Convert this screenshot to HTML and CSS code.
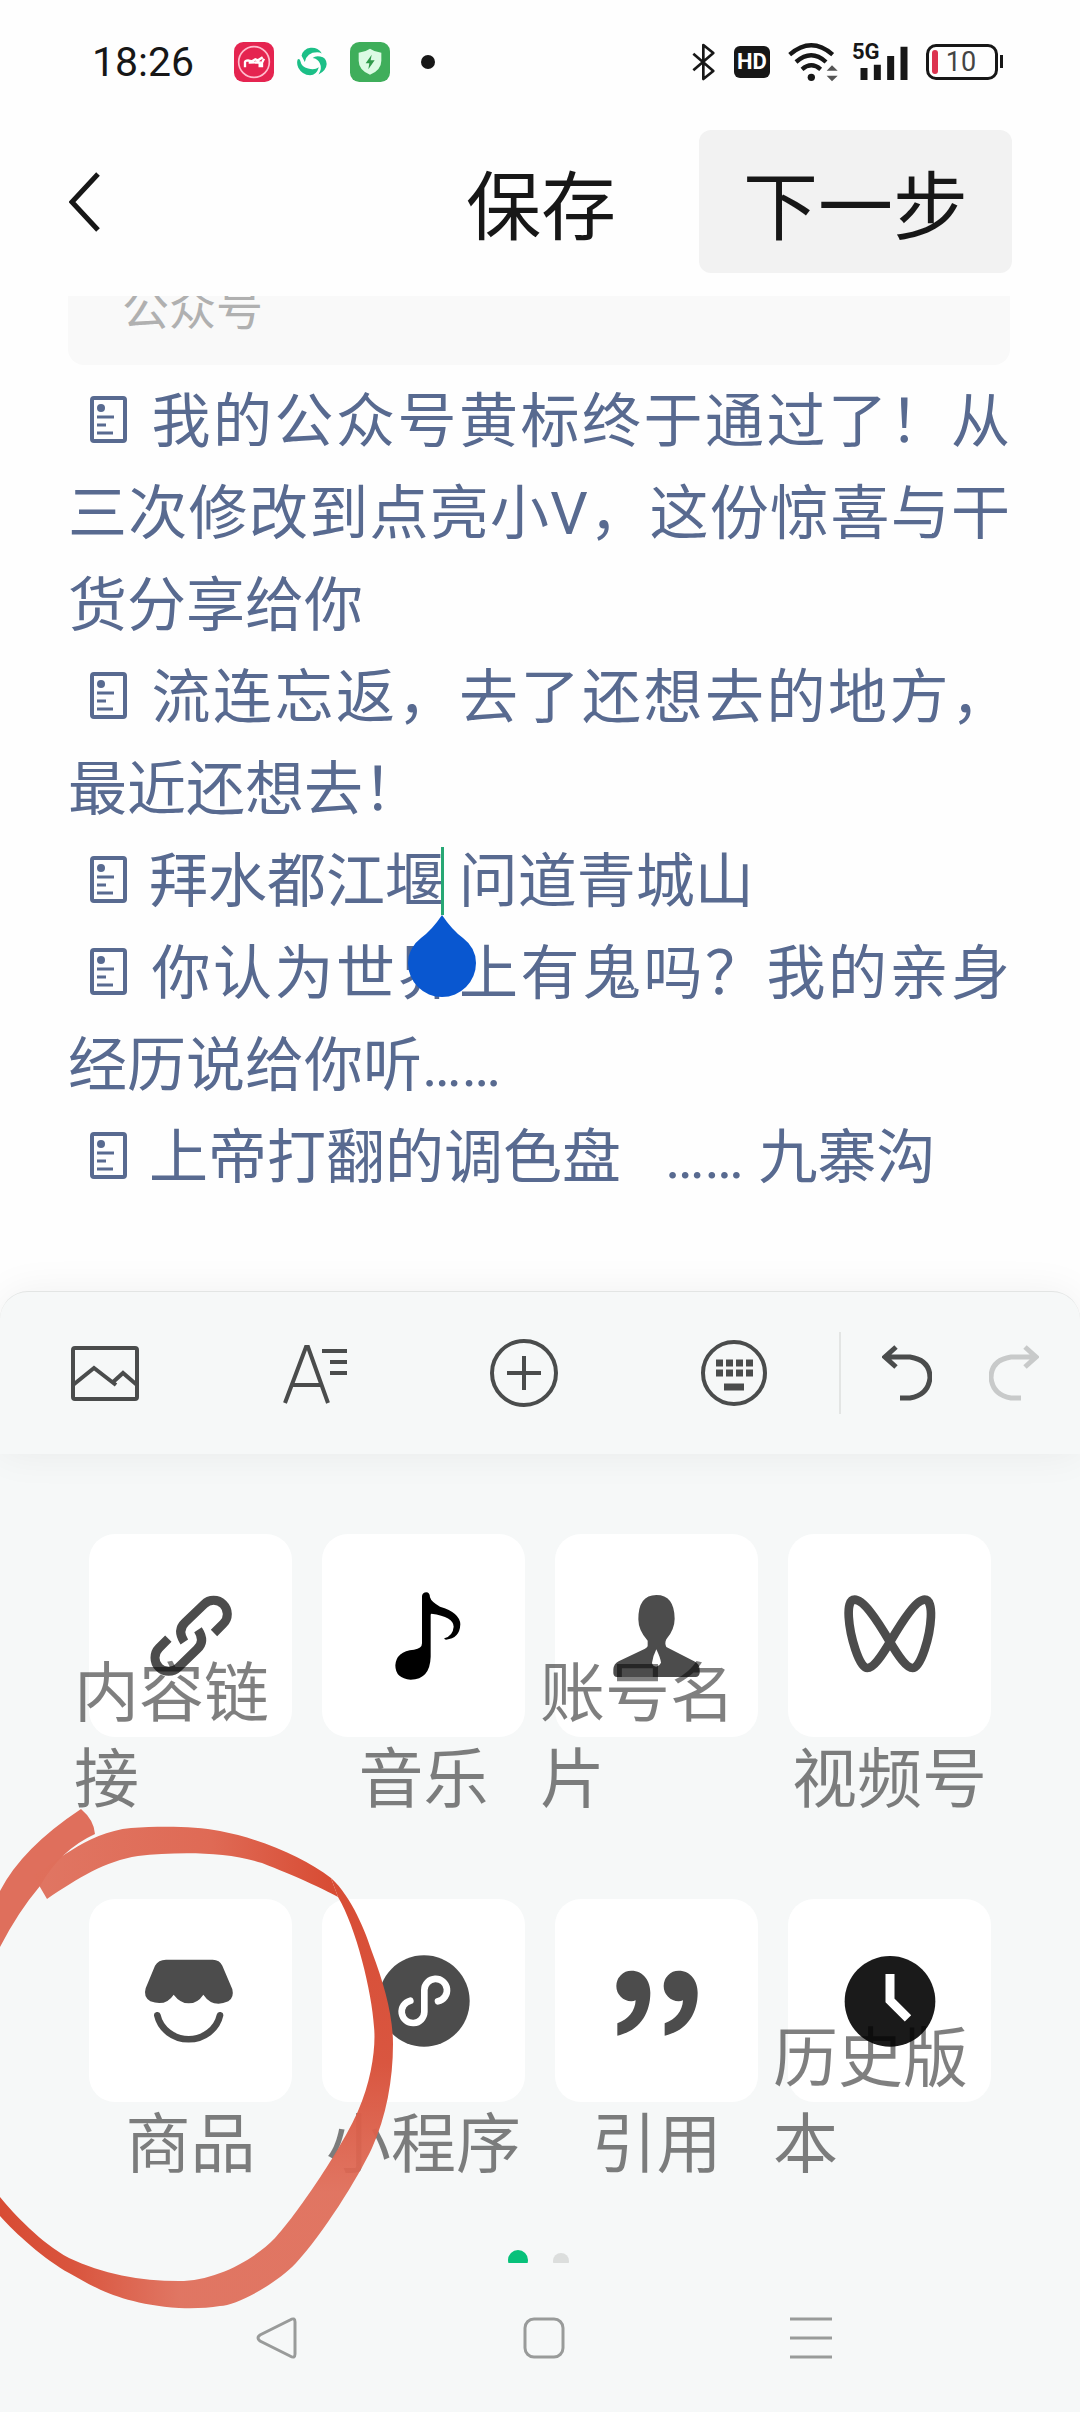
FILE: index.html
```html
<!DOCTYPE html>
<html lang="zh-CN">
<head>
  <meta charset="UTF-8">
  <meta name="viewport" content="width=device-width, initial-scale=1">
  <title>编辑文章</title>
  <link rel="stylesheet" href="styles.css">
</head>
<body>

  <svg class="defs" aria-hidden="true">
    <symbol id="doc" viewBox="0 0 37 47">
      <rect x="2" y="2" width="33" height="43" rx="2" fill="none" stroke="currentColor" stroke-width="4"/>
      <circle cx="11" cy="12" r="4" fill="currentColor"/>
      <path d="M7 21h17M7 29h9M7 37h16" stroke="currentColor" stroke-width="3"/>
    </symbol>
  </svg>

  <div class="statusbar">
    <span class="time">18:26</span>
    <svg class="app-icon" width="40" height="40" viewBox="0 0 120 120">
      <rect width="120" height="120" rx="28" fill="#e52450"/>
      <circle cx="60" cy="60" r="46" fill="none" stroke="#fbc" stroke-width="5"/>
      <path d="M33 76V60Q34 55 42 55L54 58L64 52L72 55L86 46M84 76V62L90 50M44 62L78 61M77 58V76" fill="none" stroke="#fff" stroke-width="7"/>
    </svg>
    <svg class="swirl" width="30" height="30" viewBox="0 0 92 92">
      <g fill="#1cbf87">
        <path d="M14 27A32 27 0 0 1 76 20Q70 16 62 16Q30 16 24 46Q18 34 14 27Z"/>
        <path d="M71 29Q90 32 91 52Q90 72 66 84Q78 66 70 50Q64 36 48 34Q56 26 71 29Z"/>
        <path d="M2 38Q8 34 10 42Q14 62 34 66Q54 72 67 62Q60 86 40 87Q16 86 4 64Q-2 50 2 38Z"/>
      </g>
    </svg>
    <svg class="app-icon" width="40" height="40" viewBox="0 0 120 120">
      <rect width="120" height="120" rx="28" fill="#3fae5b"/>
      <path d="M60 20Q74 30 94 32V56Q94 84 60 98Q26 84 26 56V32Q46 30 60 20Z" fill="#dcfbe4"/>
      <path d="M65 38L47 64H58L55 82L74 55H62Z" fill="#2f9a4a"/>
    </svg>
    <span class="more-dot"></span>

    <div class="signals">
      <svg width="24" height="38" viewBox="0 0 72 114">
        <path d="M4 32L64 84L34 108V6L64 30L4 82" fill="none" stroke="#171717" stroke-width="8" stroke-linejoin="round"/>
      </svg>
      <span class="hd">HD</span>
      <svg width="50" height="40" viewBox="0 0 150 120">
        <g fill="none" stroke="#171717" stroke-width="13">
          <path d="M5 38Q70-18 134 38"/>
          <path d="M24 60Q70 20 114 60"/>
          <path d="M42 82Q70 58 98 82"/>
        </g>
        <circle cx="70" cy="106" r="11" fill="#171717"/>
        <path d="M116 86L132 70L149 86ZM116 101L132 118L149 101Z" fill="#555"/>
      </svg>
      <div class="cell">
        <span class="cell-type">5G</span>
        <svg width="52" height="37" viewBox="0 0 156 111">
          <path d="M24 72V108M64 62V108M104 36V108M144 8V108" stroke="#171717" stroke-width="21"/>
        </svg>
      </div>
      <div class="battery"><span class="battery-level"></span>10</div>
    </div>
  </div>

  <header class="header">
    <button class="back" aria-label="返回">
      <svg width="32" height="60" viewBox="0 0 32 60"><path d="M29 2L3 30L29 58" fill="none" stroke="#171717" stroke-width="5"/></svg>
    </button>
    <button class="save">保存</button>
    <button class="next">下一步</button>
  </header>

  <main class="editor">
    <div class="card-tail"><span>公众号</span></div>
    <div class="article">
      <p><a href="#"><svg class="doc"><use href="#doc"/></svg>我的公众号黄标终于通过了！从三次修改到点亮小V，这份惊喜与干货分享给你</a></p>
      <p><a href="#"><svg class="doc"><use href="#doc"/></svg>流连忘返，去了还想去的地方，最近还想去！</a></p>
      <p><a href="#"><svg class="doc"><use href="#doc"/></svg>拜水都江堰<span class="caret"><svg class="handle" width="68" height="82" viewBox="0 0 68 82"><path d="M34 0Q44 15 55 23Q68 33 68 48A34 34 0 0 1 0 48Q0 33 13 23Q24 15 34 0Z" fill="#0957d0"/></svg></span> 问道青城山</a></p>
      <p><a href="#"><svg class="doc"><use href="#doc"/></svg>你认为世界上有鬼吗？我的亲身经历说给你听……</a></p>
      <p><a href="#"><svg class="doc"><use href="#doc"/></svg>上帝打翻的调色盘&nbsp;&nbsp; …… 九寨沟</a></p>
    </div>
  </main>

  <div class="toolbar">
    <div class="toolbar-main">
      <button aria-label="图片">
        <svg width="68" height="68" viewBox="0 0 68 68" fill="none" stroke="#4a4c4c" stroke-width="4">
          <rect x="2" y="9" width="64" height="51" rx="2"/>
          <path d="M2 46L23 29L45 46M41 44L52 34L66 46"/>
        </svg>
      </button>
      <button aria-label="文字样式">
        <svg width="68" height="68" viewBox="0 0 68 68" fill="none" stroke="#4a4c4c" stroke-width="4">
          <path d="M4 64L25 8H27L47 64M11 46H41M41 12H66M49 23H66M49 34H66"/>
        </svg>
      </button>
      <button aria-label="添加">
        <svg width="68" height="68" viewBox="0 0 68 68" fill="none" stroke="#4a4c4c" stroke-width="4">
          <circle cx="34" cy="34" r="32"/>
          <path d="M34 17V51M17 34H51"/>
        </svg>
      </button>
      <button aria-label="键盘">
        <svg width="68" height="68" viewBox="0 0 68 68" fill="none" stroke="#4a4c4c">
          <circle cx="34" cy="34" r="31" stroke-width="4"/>
          <path d="M16 24H53M16 34H53" stroke-width="7" stroke-dasharray="7 3"/>
          <path d="M24 48H44" stroke-width="7"/>
        </svg>
      </button>
    </div>
    <div class="toolbar-history">
      <button aria-label="撤销">
        <svg width="50" height="56" viewBox="0 0 50 56" fill="none" stroke="#4a4c4c" stroke-width="5">
          <path d="M14 2L3 12L14 22M3 12H28Q48 15 48 33Q46 50 28 53H18"/>
        </svg>
      </button>
      <button aria-label="重做" disabled>
        <svg width="50" height="56" viewBox="0 0 50 56" fill="none" stroke="#c8caca" stroke-width="5">
          <path d="M36 2L47 12L36 22M47 12H22Q2 15 2 33Q4 50 22 53H32"/>
        </svg>
      </button>
    </div>
  </div>

  <section class="panel">
    <div class="tools">
      <button class="tool">
        <span class="tile">
          <svg viewBox="0 0 300 300" fill="none" stroke="#4c4c4c" stroke-width="27">
            <path d="M219 141L247 113A41 41 0 0 0 189 55L133 109Q107 133 130 168"/>
            <path d="M82 158L54 186A41 41 0 0 0 112 244L168 190Q194 166 171 131"/>
          </svg>
        </span>
        <span class="label"><span>内容链接</span></span>
      </button>
      <button class="tool">
        <span class="tile">
          <svg viewBox="0 0 300 300">
            <path d="M144 30Q146 19 157 19Q167 19 168 34Q172 48 198 62Q258 80 259 115Q257 158 216 161Q209 160 211 157Q237 149 239 122Q239 92 172 83Q170 84 170 88V212Q168 280 110 281Q64 278 64 238Q66 196 120 191Q144 188 144 172Z"/>
          </svg>
        </span>
        <span class="label"><span>音乐</span></span>
      </button>
      <button class="tool">
        <span class="tile">
          <svg viewBox="0 0 300 300">
            <path d="M148 27Q202 27 203 98Q203 130 178 160Q172 172 178 183L260 225Q278 233 278 252V262Q276 273 266 273H30Q20 273 19 262V250Q20 234 35 226L114 188Q122 184 122 180V164Q94 134 94 100Q94 27 148 27Z" fill="#4c4c4c"/>
            <path d="M148 190Q160 215 162 230Q158 240 148 242Q136 240 135 230Q138 210 148 190Z" fill="#fff"/>
          </svg>
        </span>
        <span class="label"><span>账号名片</span></span>
      </button>
      <button class="tool">
        <span class="tile">
          <svg viewBox="0 0 300 300">
            <path d="M150 168C110 100 70 41 44 41C14 41 26 130 46 190C60 232 72 246 82 246C100 246 125 210 150 168C190 100 230 41 254 41C284 41 274 130 254 190C240 232 228 246 218 246C200 246 175 210 150 168Z" fill="none" stroke="#4c4c4c" stroke-width="26"/>
          </svg>
        </span>
        <span class="label"><span>视频号</span></span>
      </button>
      <button class="tool">
        <span class="tile">
          <svg viewBox="0 0 300 300">
            <path d="M75 26H215Q236 26 244 44L274 115Q280 140 262 151Q215 172 187 131Q170 157 143 157Q118 157 98 131Q74 168 28 151Q6 138 14 112L42 44Q52 26 75 26Z" fill="#4c4c4c"/>
            <path d="M49 193A96 90 0 0 0 237 193" fill="none" stroke="#4c4c4c" stroke-width="20" stroke-linecap="round"/>
          </svg>
        </span>
        <span class="label"><span>商品</span></span>
      </button>
      <button class="tool">
        <span class="tile">
          <svg viewBox="0 0 300 300">
            <circle cx="150" cy="150" r="137" fill="#4c4c4c"/>
            <path d="M192 151A34 34 0 1 0 151 117V183A34 34 0 1 1 109 149" fill="none" stroke="#fff" stroke-width="20" stroke-linecap="round"/>
          </svg>
        </span>
        <span class="label"><span>小程序</span></span>
      </button>
      <button class="tool">
        <span class="tile">
          <svg viewBox="0 0 300 300" fill="#4c4c4c">
            <path d="M73 59C110 59 130 90 130 125C130 190 95 240 31 254V217C65 205 84 180 86 148C82 150 78 151 73 151A45 46 0 0 1 73 59Z"/>
            <path d="M215 59C252 59 272 90 272 125C272 190 237 240 173 254V217C207 205 226 180 228 148C224 150 220 151 215 151A45 46 0 0 1 215 59Z"/>
          </svg>
        </span>
        <span class="label"><span>引用</span></span>
      </button>
      <button class="tool">
        <span class="tile">
          <svg viewBox="0 0 300 300">
            <circle cx="150" cy="151" r="136" fill="#1a1a1a"/>
            <path d="M150 69V148L204 202" fill="none" stroke="#fff" stroke-width="27"/>
          </svg>
        </span>
        <span class="label"><span>历史版本</span></span>
      </button>
    </div>

    <div class="pager"><span class="page current"></span><span class="page"></span></div>

    <!-- hand-drawn ring around 商品 -->
    <svg class="ring" width="400" height="520" viewBox="0 1800 400 520">
      <defs>
        <linearGradient id="ringTop" gradientUnits="userSpaceOnUse" x1="33" y1="0" x2="331" y2="0">
          <stop offset="0" stop-color="#df6f5b" stop-opacity=".95"/>
          <stop offset=".6" stop-color="#df6a55"/>
          <stop offset="1" stop-color="#d84c34"/>
        </linearGradient>
        <linearGradient id="ringRight" gradientUnits="userSpaceOnUse" x1="0" y1="1870" x2="0" y2="2300">
          <stop offset="0" stop-color="#d84c34"/>
          <stop offset=".45" stop-color="#d95640"/>
          <stop offset=".75" stop-color="#df6a55" stop-opacity=".92"/>
          <stop offset="1" stop-color="#df6f5b" stop-opacity=".95"/>
        </linearGradient>
        <linearGradient id="ringLeft" gradientUnits="userSpaceOnUse" x1="0" y1="0" x2="179" y2="0">
          <stop offset="0" stop-color="#d84c34"/>
          <stop offset=".4" stop-color="#d9543d"/>
          <stop offset="1" stop-color="#df6f5b" stop-opacity=".95"/>
        </linearGradient>
      </defs>
      <path d="M81 1809Q94 1820 95 1834Q60 1850 40 1886Q18 1912 0 1947V1891Q22 1848 81 1809Z" fill="#dc5b45" opacity=".88"/>
      <path d="M33 1875C50 1868 85 1832 131 1828C160 1826 195 1826 220 1831C262 1839 305 1858 331 1878L338 1897C322 1888 295 1876 262 1863C225 1851 175 1852 138 1856C105 1861 78 1878 47 1899Z" fill="url(#ringTop)"/>
      <path d="M331 1878C352 1897 366 1933 372 1952C384 1984 393 2015 393 2044C393 2080 386 2117 372 2148C358 2178 323 2234 296 2263C275 2285 237 2305 220 2306Q202 2309 179 2308V2281C215 2281 254 2260 275 2238C295 2217 341 2150 358 2111C372 2080 376 2045 374 2027C372 1992 356 1927 338 1897Z" fill="url(#ringRight)"/>
      <path d="M179 2308C120 2304 92 2286 69 2273C45 2260 15 2233 0 2216V2197C15 2215 40 2242 69 2258C102 2274 140 2281 179 2281Z" fill="url(#ringLeft)"/>
    </svg>
  </section>

  <nav class="navbar">
    <button aria-label="返回"><svg width="42" height="42" viewBox="0 0 42 42"><path d="M34 3Q39 0 39 5V37Q39 42 34 39L4 24Q0 21 4 18Z"/></svg></button>
    <button aria-label="主页"><svg width="42" height="42" viewBox="0 0 42 42"><rect x="2" y="2" width="38" height="38" rx="9"/></svg></button>
    <button aria-label="菜单"><svg width="42" height="42" viewBox="0 0 42 42"><path d="M0 2H42M0 21H42M0 40H42"/></svg></button>
  </nav>

</body>
</html>
```

FILE: styles.css
```css
* {
  box-sizing: border-box;
}

body {
  margin: 0;
  min-height: 100vh;
  display: flex;
  flex-direction: column;
  background: #fefefe;
  color: #171717;
  font-family: Roboto, "Noto Sans CJK SC", sans-serif;
  overflow-x: hidden;
}

button {
  padding: 0;
  border: none;
  background: none;
  color: inherit;
  font: inherit;
  cursor: pointer;
}

svg {
  display: block;
}

.defs {
  position: absolute;
  width: 0;
  height: 0;
}

/* status bar */
.statusbar {
  display: flex;
  align-items: center;
  height: 124px;
  padding: 0 82px 0 92px;
}

.time {
  width: 142px;
  font-size: 41px;
}

.swirl {
  margin: 0 23px;
}

.more-dot {
  width: 14px;
  height: 14px;
  margin-left: 31px;
  border-radius: 50%;
  background: #171717;
}

.signals {
  display: flex;
  align-items: center;
  gap: 18px;
  margin-left: auto;
}

.hd {
  width: 36px;
  height: 32px;
  border-radius: 6px;
  background: #171717;
  color: #fff;
  font-size: 22px;
  font-weight: 700;
  line-height: 32px;
  text-align: center;
}

.cell {
  position: relative;
}

.cell-type {
  position: absolute;
  left: -4px;
  top: -2px;
  font-size: 22px;
  font-weight: 700;
  line-height: 20px;
}

.battery {
  position: relative;
  width: 72px;
  height: 36px;
  padding-right: 2px;
  border: 3px solid #171717;
  border-radius: 10px;
  color: #444;
  font-size: 27px;
  line-height: 30px;
  text-align: center;
}

.battery::after {
  content: "";
  position: absolute;
  right: -8px;
  top: 8px;
  width: 3px;
  height: 13px;
  background: #171717;
}

.battery-level {
  position: absolute;
  left: 3px;
  top: 3px;
  width: 6px;
  height: 24px;
  border-radius: 3px;
  background: #dc3350;
}

/* header */
.header {
  display: flex;
  align-items: center;
  padding: 6px 68px 23px 69px;
  font-size: 75px;
}

.save {
  margin-left: auto;
  margin-right: 83px;
}

.next {
  height: 143px;
  padding: 0 44px;
  border-radius: 12px;
  background: #f2f2f2;
}

/* editor */
.editor {
  flex: 1;
  padding: 0 70px 87px 68px;
}

.card-tail {
  display: flex;
  align-items: flex-end;
  height: 69px;
  padding: 0 54px 26px;
  border-radius: 0 0 16px 16px;
  background: #f9f9f9;
  color: #b0b0b0;
  font-size: 47px;
  line-height: 60px;
  overflow: hidden;
}

.article {
  padding-top: 11px;
  font-size: 59px;
  line-height: 92px;
  text-align: justify;
}

.article p {
  margin: 0;
}

.article a {
  color: #586a90;
  text-decoration: none;
}

.doc {
  display: inline-block;
  width: 37px;
  height: 47px;
  margin: 0 22px 0 22px;
  vertical-align: -1px;
}

.caret {
  position: relative;
}

.caret::before {
  content: "";
  position: absolute;
  left: -3px;
  top: 0;
  width: 3px;
  height: 68px;
  background: #27a774;
}

.handle {
  position: absolute;
  left: -36px;
  top: 68px;
}

/* toolbar */
.toolbar {
  position: relative;
  z-index: 1;
  display: flex;
  align-items: center;
  height: 163px;
  border-top: 1px solid #e3e5e4;
  border-radius: 28px 28px 0 0;
  background: #f6f8f8;
  box-shadow: 0 0 40px rgba(0, 0, 0, 0.06);
}

.toolbar-main {
  flex: 1;
  display: grid;
  grid-template-columns: repeat(4, 1fr);
}

.toolbar-main button {
  display: grid;
  place-items: center;
}

.toolbar-history {
  display: flex;
  align-items: center;
  justify-content: space-between;
  width: 241px;
  height: 82px;
  padding: 0 41px;
  border-left: 2px solid #e3e5e4;
}

/* tool panel */
.panel {
  position: relative;
  padding: 80px 74px 0;
  background: #f6f8f8;
}

.tools {
  display: grid;
  grid-template-columns: repeat(4, 1fr);
  row-gap: 76px;
}

.tool {
  display: flex;
  flex-direction: column;
  align-items: center;
}

.tile {
  display: grid;
  place-items: center;
  width: 203px;
  height: 203px;
  border-radius: 26px;
  background: #fff;
}

.tile svg {
  width: 100px;
  height: 100px;
}

/* long names wrap upwards over the tile */
.label {
  display: flex;
  align-items: flex-end;
  max-width: 100%;
  height: 86px;
  color: rgba(0, 0, 0, 0.5);
  font-size: 65px;
  line-height: 86px;
  text-align: left;
}

.pager {
  display: flex;
  gap: 25px;
  height: 13px;
  margin-top: 62px;
  padding-left: 434px;
  overflow: hidden;
}

.page {
  width: 16px;
  height: 16px;
  margin-top: 3px;
  border-radius: 50%;
  background: #dcdedd;
}

.page.current {
  width: 20px;
  height: 20px;
  margin-top: 0;
  background: #07c17a;
}

.ring {
  position: absolute;
  left: 0;
  top: 346px;
  pointer-events: none;
}

/* system navigation */
.navbar {
  display: grid;
  grid-template-columns: repeat(3, 1fr);
  height: 149px;
  padding: 0 136px 0 144px;
  background: #f6f8f8;
}

.navbar button {
  display: grid;
  place-items: center;
}

.navbar svg {
  fill: none;
  stroke: #999b9a;
  stroke-width: 3;
}
```
